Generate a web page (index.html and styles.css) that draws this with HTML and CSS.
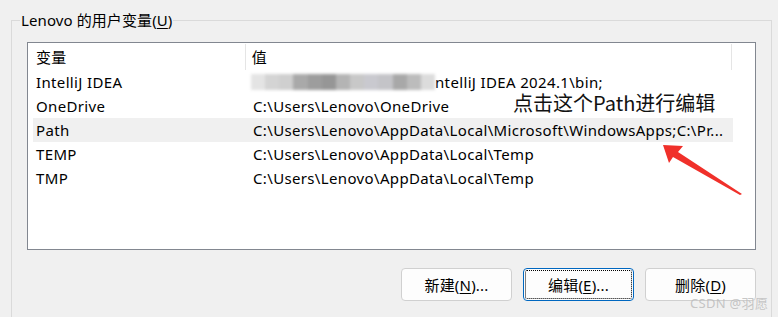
FILE: index.html
```html
<!DOCTYPE html>
<html>
<head>
<meta charset="utf-8">
<link rel="stylesheet" href="styles.css">
</head>
<body>
<div class="page">
  <section class="group">
    <div class="legend">Lenovo 的用户变量(<u>U</u>)</div>
    <div class="list">
      <div class="head">
        <div class="hcell name">变量</div>
        <div class="hcell value">值</div>
        <div class="hcell rest"></div>
      </div>
      <div class="row">
        <div class="cell name">IntelliJ IDEA</div>
        <div class="cell value"><span class="blur"><i style="background:#e4e4e4"></i><i style="background:#d4d4d4"></i><i style="background:#cfcfcf"></i><i style="background:#a9a9a9"></i><i style="background:#9d9d9d"></i><i style="background:#969696"></i><i style="background:#b4b4b4"></i><i style="background:#c8c8c8"></i><i style="background:#c9c9cf"></i><i style="background:#c4c4c8"></i><i style="background:#a8a8a8"></i><i style="background:#bcbcbc"></i><i style="background:#dcdcdc"></i></span>ntelliJ IDEA 2024.1\bin;</div>
      </div>
      <div class="row">
        <div class="cell name">OneDrive</div>
        <div class="cell value">C:\Users\Lenovo\OneDrive</div>
      </div>
      <div class="row sel">
        <div class="cell name">Path</div>
        <div class="cell value">C:\Users\Lenovo\AppData\Local\Microsoft\WindowsApps;C:\Pr...</div>
      </div>
      <div class="row">
        <div class="cell name">TEMP</div>
        <div class="cell value">C:\Users\Lenovo\AppData\Local\Temp</div>
      </div>
      <div class="row">
        <div class="cell name">TMP</div>
        <div class="cell value">C:\Users\Lenovo\AppData\Local\Temp</div>
      </div>
    </div>
    <div class="buttons">
      <button class="btn">新建(<u>N</u>)...</button>
      <button class="btn focus">编辑(<u>E</u>)...</button>
      <button class="btn">删除(<u>D</u>)</button>
    </div>
  </section>
  <div class="note">点击这个Path进行编辑</div>
  <svg class="arrow" width="778" height="317" viewBox="0 0 778 317">
    <polygon points="663,145 683,146 678,152 742,194 740,195 673,157 669,163" fill="#f0302a"/>
  </svg>
  <div class="watermark">CSDN @羽愿</div>
</div>
</body>
</html>
```
FILE: styles.css
```css
html, body {
  margin: 0;
  padding: 0;
  background: #f0f0f0;
}
body {
  width: 778px;
  height: 317px;
  overflow: hidden;
  font-family: "Noto Sans", "Noto Sans CJK SC", sans-serif;
  font-size: 15px;
  letter-spacing: 0.35px;
  color: #000;
}
.page {
  position: relative;
  width: 778px;
  height: 317px;
  overflow: hidden;
  padding-top: 20px;
  box-sizing: border-box;
}
.group {
  margin: 0 6px 0 11px;
  padding: 0 0 0 15px;
  border: 1px solid #dadada;
  height: 330px;
  box-sizing: border-box;
}
.legend {
  display: block;
  width: max-content;
  margin: -10px 0 0 -7px;
  padding: 0 1px;
  background: #f0f0f0;
  font-size: 15px;
  line-height: 18px;
  letter-spacing: 0.1px;
}
u { text-decoration: underline; text-underline-offset: 2px; }
.list {
  margin-top: 13px;
  width: 729px;
  height: 208px;
  box-sizing: border-box;
  border: 1px solid #828790;
  background: #fff;
  padding: 1px 0 0 5px;
}
.head {
  display: flex;
  height: 26px;
  align-items: stretch;
}
.hcell {
  display: flex;
  align-items: center;
  padding-left: 3px;
  line-height: 20px;
}
.hcell.name { width: 209px; padding-left: 3px; }
.hcell.value {
  width: 480px;
  border-left: 1px solid #e5e5e5;
  padding-left: 6px;
}
.hcell.rest {
  border-left: 1px solid #e5e5e5;
  width: 20px;
}
.row {
  display: flex;
  height: 24px;
  align-items: center;
  width: 700px;
}
.row.sel { background: #f0f0f0; }
.cell { white-space: nowrap; }
.cell.name { width: 210px; padding-left: 3px; }
.cell.value { padding-left: 7px; display: flex; align-items: center; }
.blur {
  display: inline-flex;
  width: 184px;
  height: 16px;
  filter: blur(1.5px);
  margin-left: -2px;
}
.blur i { flex: 1; height: 100%; }
.buttons {
  display: flex;
  gap: 11px;
  justify-content: flex-end;
  margin-top: 18px;
  margin-right: 15px;
}
.btn {
  width: 111px;
  height: 33px;
  font-family: inherit;
  font-size: 15px;
  letter-spacing: 0.2px;
  background: #fdfdfd;
  border: 1px solid #d0d0d0;
  border-radius: 4px;
  color: #000;
  padding: 0;
}
.btn.focus {
  border: 1px solid #0067c0;
  outline: 1px dotted #000;
  outline-offset: -3px;
}
.note {
  position: absolute;
  left: 513px;
  top: 93px;
  font-family: "Noto Sans CJK SC", "Noto Sans", sans-serif;
  font-size: 20px;
  letter-spacing: 0;
  line-height: 20px;
  color: #111;
}
.arrow {
  position: absolute;
  left: 0;
  top: 0;
}
.watermark {
  position: absolute;
  left: 690px;
  top: 296px;
  font-family: "Noto Sans", "Noto Sans CJK SC", sans-serif;
  font-size: 13px;
  line-height: 14px;
  letter-spacing: 0.3px;
  color: rgba(185,185,185,0.8);
}
```
